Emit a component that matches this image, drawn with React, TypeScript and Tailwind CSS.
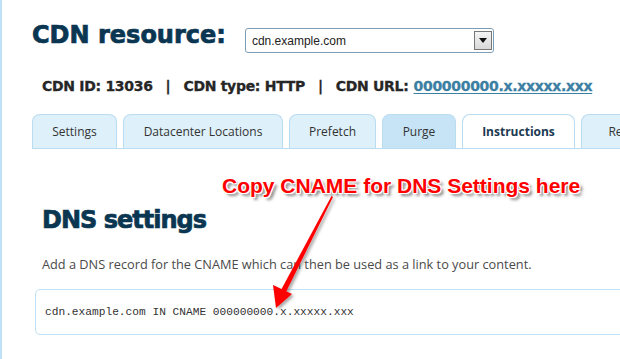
import React from 'react';

const heavy = { fontFamily: '"DejaVu Sans", Verdana, sans-serif' };

const TABS = [
  { label: 'Settings', w: 'w-[85px]' },
  { label: 'Datacenter Locations', w: 'w-[160px]' },
  { label: 'Prefetch', w: 'w-[87px]' },
  { label: 'Purge', w: 'w-[74px]', hover: true },
  { label: 'Instructions', w: 'w-[113px]', active: true },
  { label: 'Remove', w: 'w-[100px]' },
];

const Tab: React.FC<{ label: string; w: string; active?: boolean; hover?: boolean }> = ({ label, w, active, hover }) => {
  const bg = active ? 'bg-white font-bold text-[#1c3a52]' : hover ? 'bg-[#c7e4f6] text-[#333]' : 'bg-[#def0fa] text-[#333]';
  return (
    <div
      className={`${w} ${bg} h-[34px] shrink-0 flex items-center justify-center rounded-t-[8px] border border-b-0 border-[#b9dcf0] text-[12px] pt-[1px]`}
    >
      {label}
    </div>
  );
};

export default function App() {
  return (
    <div className="relative w-[620px] h-[359px] overflow-hidden bg-white border-l-2 border-[#bfe1f7]" style={{ fontFamily: '"Open Sans", sans-serif' }}>
      <div className="pl-[30px] pt-[21px]">
        {/* resource header */}
        <div className="flex items-start h-[31px]">
          <h1 className="text-[24px] leading-[28px] font-bold text-[#0b3652] [-webkit-text-stroke:0.7px_#0b3652]" style={heavy}>
            CDN resource:
          </h1>
          <div className="ml-[19px] mt-[7px] w-[249px] h-[25px] border border-[#7e9db5] rounded-[3px] flex items-center justify-between pl-[6px] pr-[1px]">
            <span className="text-[12px] text-[#222]" style={{ fontFamily: '"Liberation Sans", Arial, sans-serif' }}>cdn.example.com</span>
            <div className="w-[18px] h-[19px] border border-[#777] bg-gradient-to-b from-[#f4f4f4] to-[#d9d9d9] flex items-center justify-center">
              <svg width="8" height="5" viewBox="0 0 8 5"><path d="M0 0h8L4 5z" fill="#111" /></svg>
            </div>
          </div>
        </div>

        {/* info line */}
        <div className="mt-[25px] ml-[10px] flex items-center text-[14px] font-bold text-[#262626] whitespace-nowrap h-[18px] tracking-[-0.3px] [-webkit-text-stroke:0.3px_#262626]" style={heavy}>
          <span>CDN ID: 13036</span>
          <span className="mx-[13px]">|</span>
          <span>CDN type: HTTP</span>
          <span className="mx-[13px]">|</span>
          <span>CDN URL:</span>
          <span className="ml-[5px] text-[#3b7fa3] underline underline-offset-2 [-webkit-text-stroke:0.3px_#3b7fa3]">000000000.x.xxxxx.xxx</span>
        </div>

        {/* tabs */}
        <div className="mt-[19px] flex gap-[6px] border-b border-[#b9dcf0] w-[640px]">
          {TABS.map((t) => (
            <Tab key={t.label} {...t} />
          ))}
        </div>

        {/* dns settings */}
        <div className="pl-[10px] pt-[57px]">
          <h2 className="text-[24px] leading-[28px] font-bold text-[#0b3652] tracking-[-1px] [-webkit-text-stroke:0.7px_#0b3652]" style={heavy}>
            DNS settings
          </h2>
          <p className="mt-[21px] text-[12.75px] leading-[18px] text-[#4a4a4a]">
            Add a DNS record for the CNAME which can then be used as a link to your content.
          </p>
        </div>
        <div className="mt-[16px] ml-[3px] w-[620px] h-[46px] border border-[#bfe0f5] rounded-[5px] flex items-center pl-[9px]">
          <code className="text-[11.2px] text-[#333]" style={{ fontFamily: '"Liberation Mono", "Courier New", monospace' }}>
            cdn.example.com IN CNAME 000000000.x.xxxxx.xxx
          </code>
        </div>
      </div>

      {/* annotation */}
      <div
        className="absolute left-[220px] top-[175px] text-[21px] leading-[21px] font-bold text-[#ff0000] whitespace-nowrap [text-shadow:-1px_-1px_0_#fff,1px_-1px_0_#fff,-1px_1px_0_#fff,1px_1px_0_#fff,3px_3px_3px_rgba(0,0,0,0.5)]"
        style={{ fontFamily: '"Liberation Sans", Arial, sans-serif' }}
      >
        Copy CNAME for DNS Settings here
      </div>
      <svg className="absolute left-0 top-0 pointer-events-none" width="620" height="359">
        <defs>
          <filter id="sh" x="-50%" y="-50%" width="200%" height="200%">
            <feDropShadow dx="2" dy="2" stdDeviation="1.5" floodColor="#000" floodOpacity="0.35" />
          </filter>
        </defs>
        <g filter="url(#sh)" fill="#f00">
          <path d="M329.5 196 L331 197 L284 292 L279 290 Z" />
          <path d="M274 308 L271 285 L290 294 Z" />
        </g>
      </svg>
    </div>
  );
}
